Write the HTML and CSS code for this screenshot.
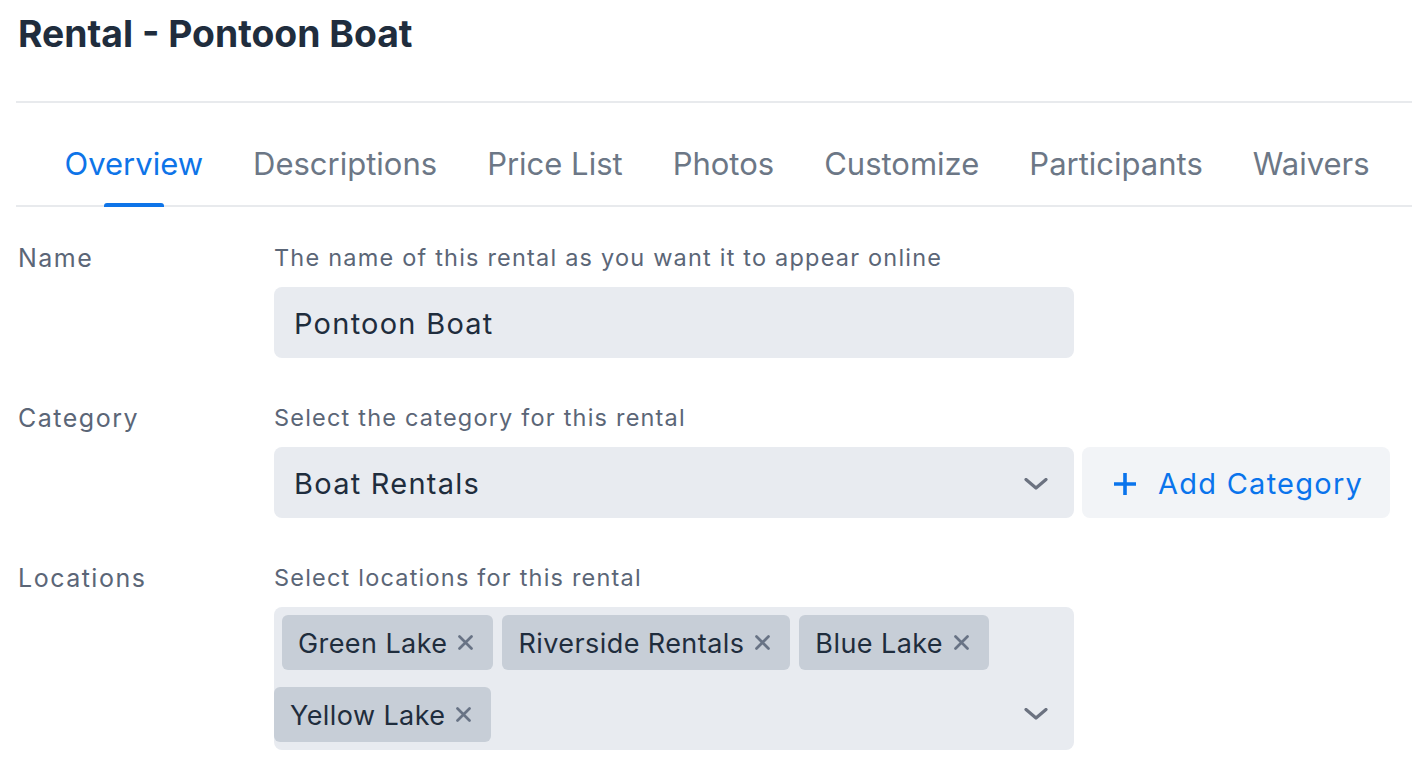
FILE: index.html
```html
<!DOCTYPE html>
<html lang="en">
<head>
<meta charset="utf-8">
<title>Rental - Pontoon Boat</title>
<link rel="stylesheet" href="styles.css">
</head>
<body>
<div class="page">
  <header class="page-header">
    <h1 class="title">Rental - Pontoon Boat</h1>
  </header>
  <nav class="tabs">
    <a class="tab active">Overview</a>
    <a class="tab">Descriptions</a>
    <a class="tab">Price List</a>
    <a class="tab">Photos</a>
    <a class="tab">Customize</a>
    <a class="tab">Participants</a>
    <a class="tab">Waivers</a>
  </nav>
  <form class="form">
    <div class="row">
      <div class="label">Name</div>
      <div class="field">
        <div class="help">The name of this rental as you want it to appear online</div>
        <div class="control-line">
          <div class="input">Pontoon Boat</div>
        </div>
      </div>
    </div>
    <div class="row">
      <div class="label">Category</div>
      <div class="field">
        <div class="help">Select the category for this rental</div>
        <div class="control-line">
          <div class="input select">
            <span>Boat Rentals</span>
            <svg class="chevron" viewBox="0 0 24 12" width="24" height="12"><path d="M2 1.5 L12 10 L22 1.5" fill="none" stroke="#6b7280" stroke-width="3.2" stroke-linecap="round" stroke-linejoin="round"/></svg>
          </div>
          <button type="button" class="add-btn">
            <svg class="plus" viewBox="0 0 24 24" width="24" height="24"><path d="M12 1 V23 M1 12 H23" fill="none" stroke="#0a74ec" stroke-width="3.6"/></svg>
            <span>Add Category</span>
          </button>
        </div>
      </div>
    </div>
    <div class="row">
      <div class="label">Locations</div>
      <div class="field">
        <div class="help">Select locations for this rental</div>
        <div class="control-line">
          <div class="multi">
            <div class="tag-rows">
              <div class="tag-row first">
                <span class="tag">Green Lake <svg class="x" viewBox="0 0 15 15" width="15" height="15"><path d="M1.5 1.5 L13.5 13.5 M13.5 1.5 L1.5 13.5" stroke="#687385" stroke-width="2.7" stroke-linecap="round"/></svg></span>
                <span class="tag">Riverside Rentals <svg class="x" viewBox="0 0 15 15" width="15" height="15"><path d="M1.5 1.5 L13.5 13.5 M13.5 1.5 L1.5 13.5" stroke="#687385" stroke-width="2.7" stroke-linecap="round"/></svg></span>
                <span class="tag">Blue Lake <svg class="x" viewBox="0 0 15 15" width="15" height="15"><path d="M1.5 1.5 L13.5 13.5 M13.5 1.5 L1.5 13.5" stroke="#687385" stroke-width="2.7" stroke-linecap="round"/></svg></span>
              </div>
              <div class="tag-row">
                <span class="tag">Yellow Lake <svg class="x" viewBox="0 0 15 15" width="15" height="15"><path d="M1.5 1.5 L13.5 13.5 M13.5 1.5 L1.5 13.5" stroke="#687385" stroke-width="2.7" stroke-linecap="round"/></svg></span>
              </div>
            </div>
            <svg class="chevron multi-chevron" viewBox="0 0 24 12" width="24" height="12"><path d="M2 1.5 L12 10 L22 1.5" fill="none" stroke="#6b7280" stroke-width="3.2" stroke-linecap="round" stroke-linejoin="round"/></svg>
          </div>
        </div>
      </div>
    </div>
  </form>
</div>
</body>
</html>
```
FILE: styles.css
```css
* { box-sizing: border-box; }
html, body { margin: 0; padding: 0; background: #ffffff; }
body {
  font-family: Inter, "Noto Sans", "Liberation Sans", sans-serif;
  color: #1f2d3d;
  width: 1412px;
  overflow: hidden;
}
.page { padding-left: 16px; }
.page-header {
  border-bottom: 2px solid #e8eaed;
  height: 103px;
  padding-top: 14px;
}
.title {
  margin: 0;
  padding-left: 2px;
  font-size: 37.3px;
  line-height: 40px;
  font-weight: 700;
  color: #202d3d;
}
.tabs {
  display: flex;
  padding-left: 24px;
  padding-top: 43px;
  border-bottom: 2px solid #e8eaed;
}
.tab {
  position: relative;
  padding: 0 25px 23px;
  font-size: 31px;
  line-height: 36px;
  color: #6c7786;
}
.tab:first-child { padding-left: 24.5px; }
.tab.active { color: #0e74e8; }
.tab.active::after {
  content: "";
  position: absolute;
  left: 50%;
  bottom: -2px;
  width: 60px;
  margin-left: -30px;
  height: 4px;
  background: #0e74e8;
  border-radius: 3px 3px 0 0;
}
.form { padding-top: 35px; }
.row {
  display: grid;
  grid-template-columns: 258px 1fr;
  margin-bottom: 44px;
}
.label {
  padding-left: 2px;
  font-size: 25px;
  line-height: 32px;
  letter-spacing: 1.5px;
  color: #5b6677;
}
.help {
  font-size: 23.5px;
  line-height: 32px;
  letter-spacing: 1.2px;
  color: #5b6677;
  margin-bottom: 13px;
}
.control-line { display: flex; gap: 8px; }
.input {
  width: 800px;
  height: 71px;
  background: #e8ebf0;
  border-radius: 8px;
  padding: 2px 20px 0;
  display: flex;
  align-items: center;
  font-size: 29px;
  letter-spacing: 1.25px;
  color: #1f2d3d;
}
.select { justify-content: space-between; padding-right: 26px; }
.add-btn {
  width: 308px;
  height: 71px;
  border: none;
  background: #f2f4f7;
  border-radius: 8px;
  display: flex;
  align-items: center;
  gap: 21px;
  padding: 2px 0 0 31px;
  font-family: inherit;
  font-size: 29px;
  letter-spacing: 1.25px;
  color: #0a74ec;
}
.multi {
  width: 800px;
  min-height: 143px;
  background: #e8ebf0;
  border-radius: 8px;
  padding: 8px 26px 8px 0;
  display: flex;
  justify-content: space-between;
  align-items: flex-end;
}
.tag-rows { display: flex; flex-direction: column; gap: 17px; }
.tag-row { display: flex; gap: 9px; }
.tag-row.first { padding-left: 8px; }
.tag {
  height: 55px;
  background: #c7ced7;
  border-radius: 6px;
  display: flex;
  align-items: center;
  gap: 11px;
  padding: 2px 20px 0 16px;
  font-size: 27px;
  letter-spacing: 0.42px;
  color: #1f2d3d;
}
.tag .x { margin-top: -2px; }
.multi-chevron { margin-bottom: 22px; }
```
